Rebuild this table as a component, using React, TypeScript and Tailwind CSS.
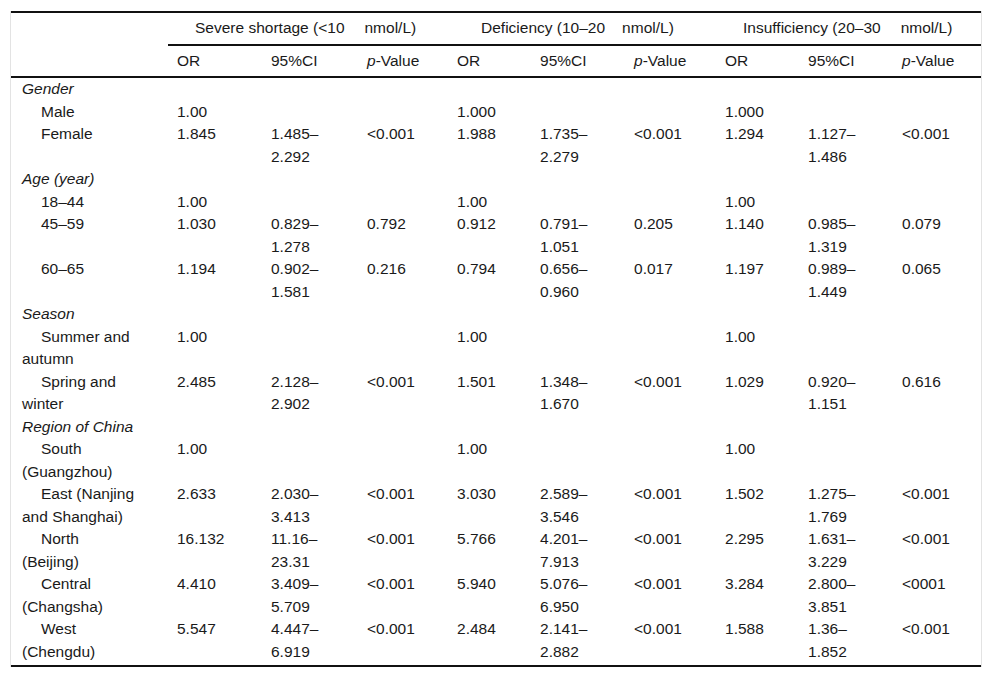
import React from "react"

type Cell = string | [string, string]
type Row = { group: string } | { label: string[]; v: Cell[] }

const blank = (a: string, b: string, c: string): Cell[] => [a, "", "", b, "", "", c, "", ""]

const rows: Row[] = [
  { group: "Gender" },
  { label: ["Male"], v: blank("1.00", "1.000", "1.000") },
  {
    label: ["Female"],
    v: ["1.845", ["1.485–", "2.292"], "<0.001", "1.988", ["1.735–", "2.279"], "<0.001", "1.294", ["1.127–", "1.486"], "<0.001"],
  },
  { group: "Age (year)" },
  { label: ["18–44"], v: blank("1.00", "1.00", "1.00") },
  {
    label: ["45–59"],
    v: ["1.030", ["0.829–", "1.278"], "0.792", "0.912", ["0.791–", "1.051"], "0.205", "1.140", ["0.985–", "1.319"], "0.079"],
  },
  {
    label: ["60–65"],
    v: ["1.194", ["0.902–", "1.581"], "0.216", "0.794", ["0.656–", "0.960"], "0.017", "1.197", ["0.989–", "1.449"], "0.065"],
  },
  { group: "Season" },
  { label: ["Summer and", "autumn"], v: blank("1.00", "1.00", "1.00") },
  {
    label: ["Spring and", "winter"],
    v: ["2.485", ["2.128–", "2.902"], "<0.001", "1.501", ["1.348–", "1.670"], "<0.001", "1.029", ["0.920–", "1.151"], "0.616"],
  },
  { group: "Region of China" },
  { label: ["South", "(Guangzhou)"], v: blank("1.00", "1.00", "1.00") },
  {
    label: ["East (Nanjing", "and Shanghai)"],
    v: ["2.633", ["2.030–", "3.413"], "<0.001", "3.030", ["2.589–", "3.546"], "<0.001", "1.502", ["1.275–", "1.769"], "<0.001"],
  },
  {
    label: ["North", "(Beijing)"],
    v: ["16.132", ["11.16–", "23.31"], "<0.001", "5.766", ["4.201–", "7.913"], "<0.001", "2.295", ["1.631–", "3.229"], "<0.001"],
  },
  {
    label: ["Central", "(Changsha)"],
    v: ["4.410", ["3.409–", "5.709"], "<0.001", "5.940", ["5.076–", "6.950"], "<0.001", "3.284", ["2.800–", "3.851"], "<0001"],
  },
  {
    label: ["West", "(Chengdu)"],
    v: ["5.547", ["4.447–", "6.919"], "<0.001", "2.484", ["2.141–", "2.882"], "<0.001", "1.588", ["1.36–", "1.852"], "<0.001"],
  },
]

const widths = ["w-[157px]", "w-[94px]", "w-[96px]", "w-[90px]", "w-[83px]", "w-[94px]", "w-[91px]", "w-[83px]", "w-[94px]", "w-[88px]"]

function Sub() {
  return (
    <>
      <th className="px-[9px] py-[4px] text-left font-normal">OR</th>
      <th className="px-[9px] py-[4px] text-left font-normal">95%CI</th>
      <th className="px-[9px] py-[4px] text-left font-normal">
        <i>p</i>-Value
      </th>
    </>
  )
}

export default function App() {
  return (
    <div
      className="bg-white pl-[10px] pt-[10px] text-[15.5px] leading-[22.5px] text-[#1a1a1a]"
      style={{ fontFamily: '"Liberation Sans", Arial, sans-serif' }}
    >
      <div className="w-[972px] border-x border-[#e3e3e3]">
        <div className="mt-[1px] border-t-2 border-b-2 border-[#111] pb-[2px]">
          <table className="w-[970px] table-fixed">
            <colgroup>
              {widths.map((w, i) => (
                <col key={i} className={w} />
              ))}
            </colgroup>
            <thead>
              <tr>
                <th rowSpan={2} className="border-b-2 border-[#111]" />
                <th colSpan={3} className="border-b-2 border-[#111] pl-[27px] py-1 text-left font-normal whitespace-nowrap">
                  Severe shortage (&lt;10<span className="ml-[20px]">nmol/L)</span>
                </th>
                <th colSpan={3} className="border-b-2 border-[#111] pl-[33px] py-1 text-left font-normal whitespace-nowrap">
                  Deficiency (10–20<span className="ml-[17px]">nmol/L)</span>
                </th>
                <th colSpan={3} className="border-b-2 border-[#111] pl-[27px] py-1 text-left font-normal whitespace-nowrap">
                  Insufficiency (20–30<span className="ml-[20px]">nmol/L)</span>
                </th>
              </tr>
              <tr className="border-b-2 border-[#111]">
                <Sub />
                <Sub />
                <Sub />
              </tr>
            </thead>
            <tbody>
              {rows.map((r, i) =>
                "group" in r ? (
                  <tr key={i}>
                    <td colSpan={10} className="pl-[11px] italic">
                      {r.group}
                    </td>
                  </tr>
                ) : (
                  <tr key={i} className="align-top">
                    <td className="pl-[11px]">
                      <div className="indent-[19px]">
                        {r.label[0]}
                        {r.label[1] && (
                          <>
                            <br />
                            {r.label[1]}
                          </>
                        )}
                      </div>
                    </td>
                    {r.v.map((c, j) => (
                      <td key={j} className="pl-[9px]">
                        {Array.isArray(c) ? (
                          <>
                            {c[0]}
                            <br />
                            {c[1]}
                          </>
                        ) : (
                          c
                        )}
                      </td>
                    ))}
                  </tr>
                ),
              )}
            </tbody>
          </table>
        </div>
      </div>
    </div>
  )
}
